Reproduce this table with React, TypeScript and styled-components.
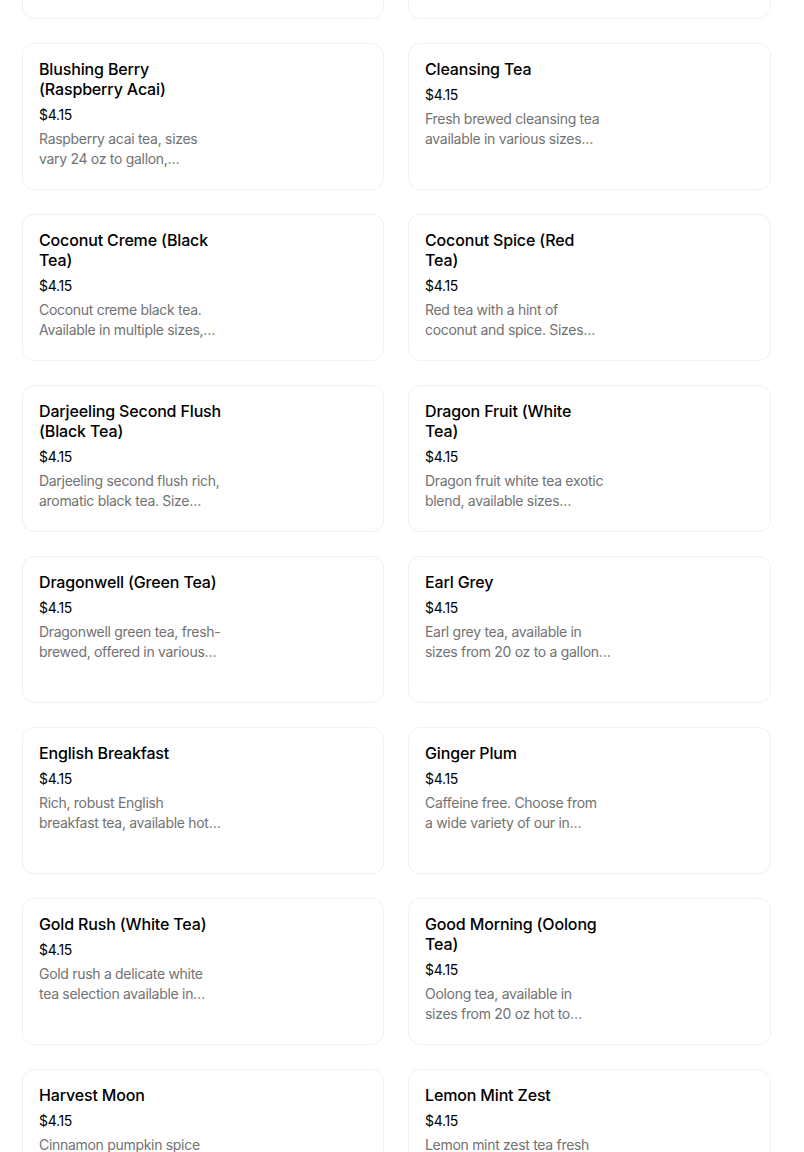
import React from "react";
import styled, { createGlobalStyle } from "styled-components";

const Global = createGlobalStyle`
  html, body { margin: 0; padding: 0; background: #ffffff; }
  body { font-family: "Inter", "Liberation Sans", sans-serif; -webkit-font-smoothing: antialiased; }
  * { box-sizing: border-box; }
`;

const Page = styled.div`
  width: 804px;
  height: 1152px;
  overflow: hidden;
  background: #fff;
`;

const Grid = styled.ul`
  list-style: none;
  margin: -128px 0 0 0;
  padding: 0 33px 0 22px;
  display: grid;
  grid-template-columns: 362px 363px;
  column-gap: 24px;
  row-gap: 24px;
`;

const Card = styled.li`
  height: 147px;
  border: 1px solid #f1f1f1;
  border-radius: 12px;
  padding: 15px 16px 16px;
  display: flex;
  background: #fff;
`;

const Info = styled.div`
  width: 192px;
  display: flex;
  flex-direction: column;
`;

const Title = styled.h3`
  margin: 0;
  font-size: 16px;
  line-height: 20px;
  font-weight: 500;
  letter-spacing: -0.15px;
  color: #000;
`;

const Price = styled.div`
  margin-top: 6px;
  font-size: 14px;
  line-height: 20px;
  letter-spacing: -0.3px;
  color: #000;
`;

const Desc = styled.p`
  margin: 4px 0 0 0;
  font-size: 14px;
  line-height: 20px;
  letter-spacing: -0.3px;
  color: #727272;
`;

const Line = styled.span`
  display: block;
  white-space: nowrap;
  overflow: hidden;
  text-overflow: ellipsis;
`;

type Item = { name: string[]; price: string; desc: string[] };

const items: Item[] = [
  { name: ["Blushing Berry", "(Raspberry Acai)"], price: "$4.15", desc: ["Raspberry acai tea, sizes", "vary 24 oz to gallon,…"] },
  { name: ["Cleansing Tea"], price: "$4.15", desc: ["Fresh brewed cleansing tea", "available in various sizes…"] },
  { name: ["Coconut Creme (Black", "Tea)"], price: "$4.15", desc: ["Coconut creme black tea.", "Available in multiple sizes,…"] },
  { name: ["Coconut Spice (Red", "Tea)"], price: "$4.15", desc: ["Red tea with a hint of", "coconut and spice. Sizes…"] },
  { name: ["Darjeeling Second Flush", "(Black Tea)"], price: "$4.15", desc: ["Darjeeling second flush rich,", "aromatic black tea. Size…"] },
  { name: ["Dragon Fruit (White", "Tea)"], price: "$4.15", desc: ["Dragon fruit white tea exotic", "blend, available sizes…"] },
  { name: ["Dragonwell (Green Tea)"], price: "$4.15", desc: ["Dragonwell green tea, fresh-", "brewed, offered in various…"] },
  { name: ["Earl Grey"], price: "$4.15", desc: ["Earl grey tea, available in", "sizes from 20 oz to a gallon…"] },
  { name: ["English Breakfast"], price: "$4.15", desc: ["Rich, robust English", "breakfast tea, available hot…"] },
  { name: ["Ginger Plum"], price: "$4.15", desc: ["Caffeine free. Choose from", "a wide variety of our in…"] },
  { name: ["Gold Rush (White Tea)"], price: "$4.15", desc: ["Gold rush a delicate white", "tea selection available in…"] },
  { name: ["Good Morning (Oolong", "Tea)"], price: "$4.15", desc: ["Oolong tea, available in", "sizes from 20 oz hot to…"] },
  { name: ["Harvest Moon"], price: "$4.15", desc: ["Cinnamon pumpkin spice", "tea, available in multiple…"] },
  { name: ["Lemon Mint Zest"], price: "$4.15", desc: ["Lemon mint zest tea fresh", "brewed, available in…"] },
];

export default function App() {
  return (
    <Page>
      <Global />
      <Grid>
        <Card aria-hidden="true" />
        <Card aria-hidden="true" />
        {items.map((it) => (
          <Card key={it.name.join(" ")}>
            <Info>
              <Title>
                {it.name.map((l) => (
                  <Line key={l}>{l}</Line>
                ))}
              </Title>
              <Price>{it.price}</Price>
              <Desc>
                {it.desc.map((l) => (
                  <Line key={l}>{l}</Line>
                ))}
              </Desc>
            </Info>
          </Card>
        ))}
      </Grid>
    </Page>
  );
}
